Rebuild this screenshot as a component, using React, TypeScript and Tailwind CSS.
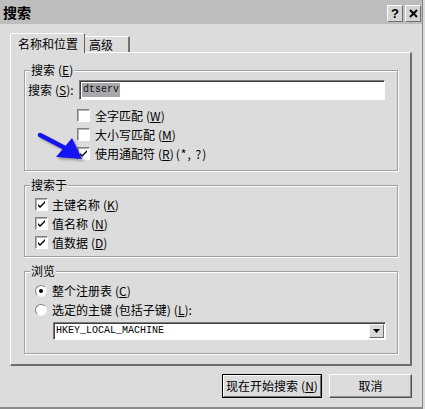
import React from "react";

function U({ c }: { c: string }) {
  return <span className="underline underline-offset-[1px] decoration-1">{c}</span>;
}

function Key({ c }: { c: string }) {
  return (
    <span className="ml-[3px]">
      (<U c={c} />)
    </span>
  );
}

function CheckBox({ checked }: { checked?: boolean }) {
  return (
    <div className="w-[13px] h-[13px] shrink-0 bg-white border border-t-[#808080] border-l-[#808080] border-b-white border-r-white shadow-[inset_1px_1px_0_#b0b0b0] flex items-center justify-center">
      {checked && (
        <svg width="9" height="9" viewBox="0 0 9 9">
          <path d="M1 4 L3 6 L8 1 L8 3 L3 8 L1 6 Z" fill="#000" />
        </svg>
      )}
    </div>
  );
}

function Radio({ checked }: { checked?: boolean }) {
  return (
    <div className="w-[12px] h-[12px] shrink-0 rounded-full bg-white border border-t-[#808080] border-l-[#808080] border-b-[#f4f4f4] border-r-[#f4f4f4] flex items-center justify-center">
      {checked && <div className="w-[4px] h-[4px] rounded-full bg-black" />}
    </div>
  );
}

function Group({
  title,
  className,
  children,
}: {
  title: React.ReactNode;
  className: string;
  children: React.ReactNode;
}) {
  return (
    <div
      className={`relative border border-[#a0a0a0] shadow-[inset_1px_1px_0_#fff,1px_1px_0_#fff] ${className}`}
    >
      <span className="absolute top-[-9px] left-[5px] bg-[#dcdcdc] px-[1px] leading-[16px]">
        {title}
      </span>
      {children}
    </div>
  );
}

function Row({ children, className = "" }: { children: React.ReactNode; className?: string }) {
  return <div className={`h-[19px] flex items-center ${className}`}>{children}</div>;
}

export default function App() {
  return (
    <div className="w-[425px] h-[409px] bg-[#dcdcdc] overflow-hidden font-['Noto_Sans_CJK_SC','Noto_Sans',sans-serif]">
      <div className="w-[423px] h-[409px] text-[12px] text-black relative flex flex-col leading-none border-b-[2px] border-r border-b-[#8a8a8a] border-r-[#858585]">
        {/* Title bar */}
        <div className="h-[24px] shrink-0 bg-[#bdbdbd] flex items-center justify-between pl-[3px] pr-[1px]">
          <span className="font-bold text-[14px]">搜索</span>
          <div className="flex gap-[2px] mt-[2px]">
            <div className="w-[16px] h-[17px] bg-[#d4d4d4] border border-t-white border-l-white border-r-[#707070] border-b-[#707070] flex items-center justify-center font-['Liberation_Sans',sans-serif] font-bold text-[13px]">
              ?
            </div>
            <div className="w-[16px] h-[17px] bg-[#d4d4d4] border border-t-white border-l-white border-r-[#707070] border-b-[#707070] flex items-center justify-center">
              <svg width="9" height="9" viewBox="0 0 9 9">
                <path d="M1 1 L8 8 M8 1 L1 8" stroke="#000" strokeWidth="2" />
              </svg>
            </div>
          </div>
        </div>

        {/* Body */}
        <div className="flex flex-col pl-[10px] pr-[10px]">
          {/* Tabs */}
          <div className="mt-[9px] h-[19px] flex items-end relative z-10">
            <div className="w-[75px] h-[20px] -mb-px bg-[#dcdcdc] border-t border-l border-white border-r border-r-[#606060] rounded-tl-[2px] flex items-center pl-[7px]">
              名称和位置
            </div>
            <div className="w-[45px] h-[16px] border-t border-white border-r-2 border-r-[#707070] rounded-tr-[2px] flex items-center pl-[4px]">
              高级
            </div>
          </div>

          {/* Panel */}
          <div className="h-[314px] border-t border-l border-white border-r-2 border-b-2 border-r-[#6e6e6e] border-b-[#6e6e6e] pt-[17px] pl-[13px] flex flex-col">
            <Group title={<>搜索<Key c="E" /></>} className="w-[374px] h-[101px]">
              <div className="flex items-center mt-[9px] h-[20px]">
                <span className="pl-[3px] w-[54px]">
                  搜索<Key c="S" />:
                </span>
                <div className="w-[306px] h-[20px] bg-white border border-t-[#7a7a7a] border-l-[#7a7a7a] border-b-white border-r-white shadow-[inset_1px_1px_0_#404040] flex items-center pl-[2px]">
                  <span className="bg-[#a8a8ac] text-[#101010] font-['Liberation_Mono',monospace] text-[10px] leading-[14px] px-[1px]">
                    dtserv
                  </span>
                </div>
              </div>
              <div className="ml-[52px] mt-[6px] flex flex-col">
                <Row>
                  <CheckBox />
                  <span className="ml-[5px]">
                    全字匹配<Key c="W" />
                  </span>
                </Row>
                <Row>
                  <CheckBox />
                  <span className="ml-[5px]">
                    大小写匹配<Key c="M" />
                  </span>
                </Row>
                <Row>
                  <CheckBox checked />
                  <span className="ml-[5px]">
                    使用通配符<Key c="R" />
                    <span className="ml-[2px] tracking-[1px]">(*, ?)</span>
                  </span>
                </Row>
              </div>
            </Group>

            <Group title="搜索于" className="w-[374px] h-[72px] mt-[14px]">
              <div className="pt-[9px] pl-[10px] flex flex-col">
                <Row>
                  <CheckBox checked />
                  <span className="ml-[4px]">
                    主键名称<Key c="K" />
                  </span>
                </Row>
                <Row>
                  <CheckBox checked />
                  <span className="ml-[4px]">
                    值名称<Key c="N" />
                  </span>
                </Row>
                <Row>
                  <CheckBox checked />
                  <span className="ml-[4px]">
                    值数据<Key c="D" />
                  </span>
                </Row>
              </div>
            </Group>

            <Group title="浏览" className="w-[374px] h-[83px] mt-[14px]">
              <div className="pt-[9px] pl-[10px] flex flex-col">
                <Row>
                  <Radio checked />
                  <span className="ml-[5px]">
                    整个注册表<Key c="C" />
                  </span>
                </Row>
                <Row>
                  <Radio />
                  <span className="ml-[5px]">
                    选定的主键 (包括子键)<Key c="L" />:
                  </span>
                </Row>
                <div className="ml-[18px] mt-[3px] w-[333px] h-[18px] bg-white border border-t-[#7a7a7a] border-l-[#7a7a7a] border-b-white border-r-white shadow-[inset_1px_1px_0_#404040] flex items-center justify-between pl-[2px] pr-[1px]">
                  <span className="font-['Liberation_Mono',monospace] text-[10px]">HKEY_LOCAL_MACHINE</span>
                  <div className="w-[15px] h-[14px] bg-[#d8d8d8] border border-t-white border-l-white border-r-[#707070] border-b-[#707070] flex items-center justify-center">
                    <svg width="7" height="4" viewBox="0 0 7 4">
                      <path d="M0 0 L7 0 L3.5 4 Z" fill="#000" />
                    </svg>
                  </div>
                </div>
              </div>
            </Group>
          </div>

          {/* Buttons */}
          <div className="mt-[8px] flex justify-end gap-[7px]">
            <div className="w-[100px] h-[24px] border border-black">
              <div className="w-full h-full border border-t-white border-l-white border-r-[#707070] border-b-[#707070] flex items-center justify-center">
                现在开始搜索<Key c="N" />
              </div>
            </div>
            <div className="w-[83px] h-[24px] border border-t-white border-l-white border-r-[#505050] border-b-[#505050] shadow-[inset_-1px_-1px_0_#909090] flex items-center justify-center">
              取消
            </div>
          </div>
        </div>

        {/* Annotation arrow */}
        <svg className="absolute left-0 top-0 pointer-events-none" width="423" height="409">
          <defs>
            <filter id="sh" x="-20%" y="-20%" width="140%" height="140%">
              <feGaussianBlur stdDeviation="1.2" />
            </filter>
          </defs>
          <g transform="translate(2,2)" filter="url(#sh)" opacity="0.45">
            <path d="M40 135 L65 148" stroke="#444" strokeWidth="4.5" strokeLinecap="round" />
            <path d="M56 157 L72 138 L82 159 Z" fill="#444" />
          </g>
          <path d="M40 135 L65 148" stroke="#1414f0" strokeWidth="4.5" strokeLinecap="round" />
          <path d="M56 157 L72 138 L82 159 Z" fill="#1414f0" />
        </svg>
      </div>
    </div>
  );
}
